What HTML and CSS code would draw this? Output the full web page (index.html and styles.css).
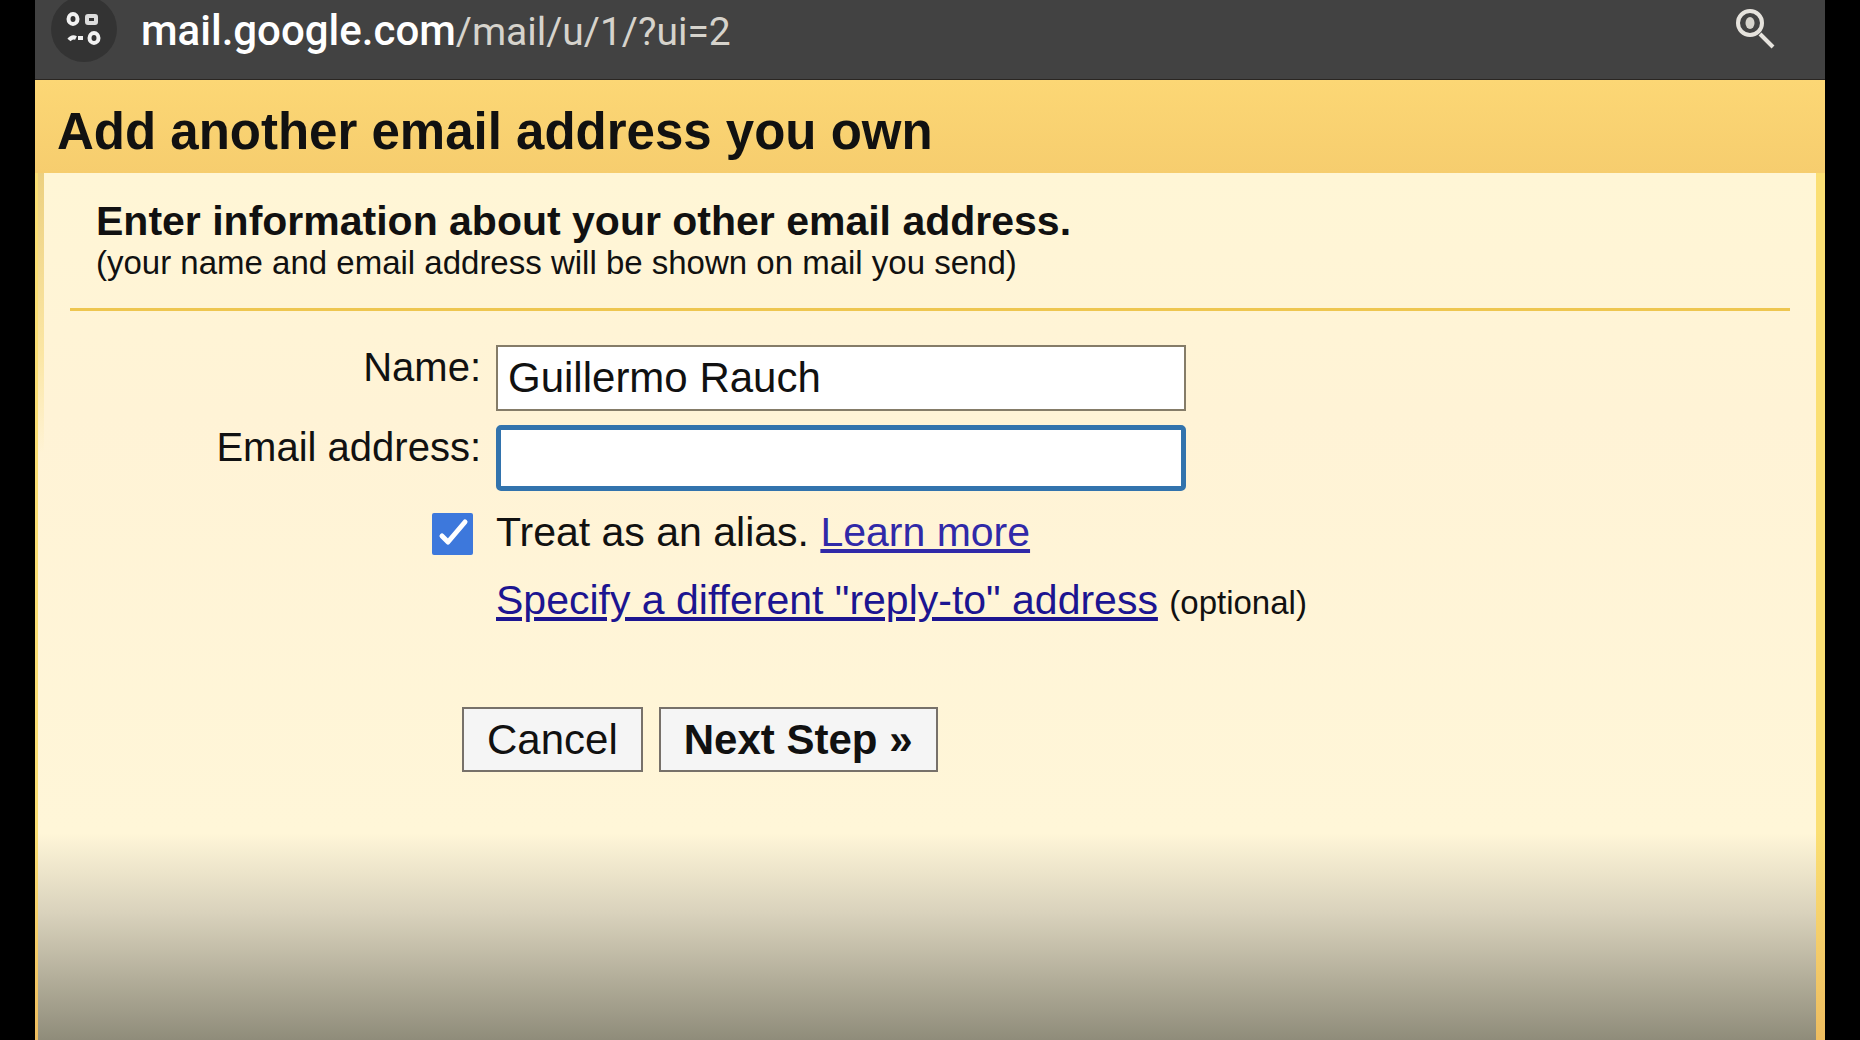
FILE: index.html
```html
<!DOCTYPE html>
<html lang="en">
<head>
  <meta charset="UTF-8" />
  <title>Gmail - Add another email address you own</title>
  <meta name="viewport" content="width=device-width, initial-scale=1.0" />
  <link rel="stylesheet" href="styles.css">
</head>
<body>
  <div class="window">

    <!-- Address bar -->
    <div class="address-bar">
      <button class="site-info" aria-label="View site information">
        <svg width="36" height="36" viewBox="0 0 36 36" fill="none" stroke="#f1f1f1">
          <ellipse cx="7" cy="8" rx="4.5" ry="5" stroke-width="4" />
          <rect x="21" y="5" width="9" height="7" rx="1" stroke-width="4" stroke="#dcdcdc" />
          <path d="M3 29q3-4 7-2M12 27h5" stroke-width="4" />
          <ellipse cx="28" cy="27" rx="4.5" ry="5" stroke-width="4" />
        </svg>
      </button>
      <div class="url"><span class="domain">mail.google.com</span>/mail/u/1/?ui=2</div>
      <button class="zoom-button" aria-label="Zoom">
        <svg width="42" height="42" viewBox="0 0 42 42" fill="none" stroke="#e6e3dd">
          <circle cx="15" cy="15" r="12" stroke-width="4" />
          <path d="M25 26l13 13" stroke-width="4" />
          <ellipse cx="15" cy="15" rx="4.5" ry="6" fill="#d6d3cc" stroke="none" />
        </svg>
      </button>
    </div>

    <h1>Add another email address you own</h1>

    <!-- Form -->
    <form class="panel">
      <div class="intro">
        <h2>Enter information about your other email address.</h2>
        <p class="small">(your name and email address will be shown on mail you send)</p>
      </div>

      <div class="fields">
        <label class="field-label" for="name">Name:</label>
        <input type="text" id="name" value="Guillermo Rauch" />

        <label class="field-label" for="email">Email address:</label>
        <input type="text" id="email" class="focused" />

        <input type="checkbox" id="alias" checked />
        <div class="line"><label for="alias">Treat as an alias.</label> <a href="#" class="learn">Learn more</a></div>

        <div class="line reply"><a href="#">Specify a different "reply-to" address</a> <span class="small">(optional)</span></div>
      </div>

      <div class="button-row">
        <button type="button">Cancel</button>
        <button type="submit" class="next">Next Step »</button>
      </div>
    </form>

  </div>
</body>
</html>
```

FILE: styles.css
```css
* {
  box-sizing: border-box;
}

html, body {
  margin: 0;
  padding: 0;
  font-family: "Liberation Sans", Arial, sans-serif;
  font-size: 41px;
  background: #000;
  color: #111;
}

.window {
  display: flex;
  flex-direction: column;
  min-height: 100vh;
  margin: 0 35px;
  background: linear-gradient(#fbdf74, #fbdf74 80%, #eebd60);
}

.address-bar {
  display: flex;
  align-items: flex-start;
  height: 80px;
  padding: 0 48px 0 16px;
  background: #424242;
  border-bottom: 1px solid #2a2622;
}

.address-bar button {
  display: flex;
  justify-content: center;
  padding: 0;
  border: none;
  background: none;
  cursor: pointer;
}

/* the circle is cut off by the top edge */
.address-bar .site-info {
  width: 66px;
  height: 66px;
  margin-top: -4px;
  padding-top: 15px;
  border-radius: 50%;
  background: #333;
}

.address-bar .zoom-button {
  padding-top: 8px;
}

.url {
  flex: 1;
  padding: 9px 24px;
  font-family: Roboto, sans-serif;
  font-size: 39px;
  line-height: 44px;
  color: #d6d3cc;
}

.domain {
  font-size: 42px;
  font-weight: 500;
  color: #fff;
}

h1 {
  margin: 0;
  padding: 22px 22px 11px;
  font-size: 51px;
  line-height: 60px;
  background: linear-gradient(#fcd775, #f6cd6e);
}

.panel {
  flex: 1;
  margin: 0 9px 0 3px;
  padding: 25px 26px 25px 32px;
  background:
    linear-gradient(#ecd080, #fbe6a4 180px, transparent 280px) left top / 6px 100% no-repeat,
    linear-gradient(#fff6d6, #fff3d6 240px, #fff6d8 660px, #d9d2bc 740px, #8f8c7a);
}

.intro {
  padding: 0 26px 26px;
  border-bottom: 3px solid #eec650;
}

h2 {
  margin: 0;
  font-size: 41px;
  line-height: 46px;
}

.small {
  margin: 0;
  font-size: 33px;
  line-height: 38px;
}

.fields {
  display: grid;
  grid-template-columns: 411px 1fr;
  column-gap: 15px;
  row-gap: 14px;
  padding-top: 34px;
}

.field-label {
  text-align: right;
  font-size: 40px;
  line-height: 44px;
}

input[type="text"] {
  width: 690px;
  height: 66px;
  padding: 0 10px;
  border: 2px solid #857c68;
  background: #fff;
  font: inherit;
  font-size: 42px;
  color: #111;
}

input.focused {
  border: 5px solid #3273ad;
  border-radius: 5px;
  outline: none;
}

input[type="checkbox"] {
  appearance: none;
  justify-self: end;
  width: 41px;
  height: 42px;
  margin: 8px 8px 0 0;
  border-radius: 2px;
  background: #3d78dc;
}

input[type="checkbox"]:checked {
  background-image: url("data:image/svg+xml,%3Csvg xmlns='http://www.w3.org/2000/svg' viewBox='0 0 41 42'%3E%3Cpath d='M10 23l6 6L33 9' fill='none' stroke='white' stroke-width='5' stroke-linecap='round' stroke-linejoin='round'/%3E%3C/svg%3E");
}

.line {
  line-height: 54px;
}

.reply {
  grid-column: 2;
}

a {
  color: #1c1591;
}

.learn {
  color: #3029a8;
}

.button-row {
  display: flex;
  gap: 16px;
  padding: 80px 0 0 392px;
}

.button-row button {
  height: 65px;
  padding: 0 23px;
  border: 2px solid #77716a;
  background: #f5f5f5;
  font: inherit;
  font-size: 42px;
  color: #111;
  cursor: pointer;
}

.button-row .next {
  font-weight: bold;
}
```
